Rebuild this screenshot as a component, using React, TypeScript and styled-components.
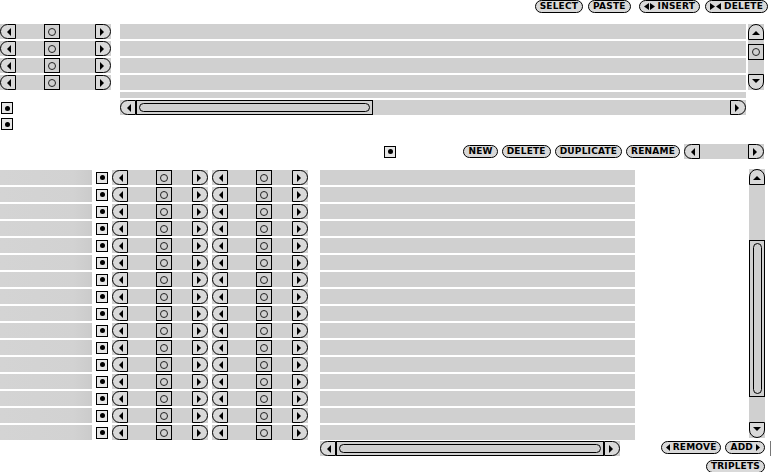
import React from 'react';
import styled, { createGlobalStyle } from 'styled-components';

const GRAY = '#d0d0d0';
const FILL = '#d9d9d9';

const Global = createGlobalStyle`
  html, body { margin: 0; padding: 0; background: #fff; }
  body { font-family: "DejaVu Sans", Verdana, sans-serif; }
`;

const Page = styled.div`
  width: 772px;
  height: 472px;
  overflow: hidden;
  display: flex;
  flex-direction: column;
`;

/* ---------- small controls ---------- */

type Dir = 'left' | 'right' | 'up' | 'down';

const radius: Record<Dir, string> = {
  left: '8px 0 0 8px',
  right: '0 8px 8px 0',
  up: '8px 8px 0 0',
  down: '0 0 8px 8px',
};

const tri: Record<Dir, string> = {
  left: 'border-top:4px solid transparent;border-bottom:4px solid transparent;border-right:4px solid #000;margin-left:2px;',
  right: 'border-top:4px solid transparent;border-bottom:4px solid transparent;border-left:4px solid #000;margin-right:2px;',
  up: 'border-left:4px solid transparent;border-right:4px solid transparent;border-bottom:4px solid #000;margin-top:2px;',
  down: 'border-left:4px solid transparent;border-right:4px solid transparent;border-top:4px solid #000;margin-bottom:2px;',
};

const Arrow = styled.div<{ $dir: Dir }>`
  box-sizing: border-box;
  flex: none;
  width: ${(p) => (p.$dir === 'up' || p.$dir === 'down' ? '100%' : '16px')};
  height: ${(p) => (p.$dir === 'up' || p.$dir === 'down' ? '16px' : '100%')};
  border: 1px solid #000;
  border-radius: ${(p) => radius[p.$dir]};
  background: ${FILL};
  display: flex;
  align-items: center;
  justify-content: center;
  &::after {
    content: '';
    width: 0;
    height: 0;
    ${(p) => tri[p.$dir]}
  }
`;

const Check = styled.div`
  box-sizing: border-box;
  flex: none;
  width: 12px;
  height: 12px;
  border: 1px solid #000;
  background: #e6e6e6;
  display: flex;
  align-items: center;
  justify-content: center;
  &::after {
    content: '';
    width: 5px;
    height: 5px;
    border-radius: 50%;
    background: #000;
  }
`;

const SliderBox = styled.div<{ $w: number }>`
  flex: none;
  width: ${(p) => p.$w}px;
  height: 15px;
  display: flex;
  background: ${GRAY};
`;

const Track = styled.div`
  flex: 1;
  display: flex;
  align-items: stretch;
`;

const Knob = styled.div<{ $offset: number }>`
  box-sizing: border-box;
  width: 16px;
  border: 1px solid #000;
  margin-left: ${(p) => p.$offset}px;
  display: flex;
  align-items: center;
  justify-content: center;
  &::after {
    content: '';
    box-sizing: border-box;
    width: 8px;
    height: 8px;
    border: 1px solid #222;
    border-radius: 50%;
  }
`;

function Slider({ width, knob }: { width: number; knob?: number }) {
  return (
    <SliderBox $w={width}>
      <Arrow $dir="left" />
      <Track>{knob !== undefined && <Knob $offset={knob} />}</Track>
      <Arrow $dir="right" />
    </SliderBox>
  );
}

/* scrollbars */

const HBar = styled.div<{ $w: number }>`
  flex: none;
  width: ${(p) => p.$w}px;
  height: 15px;
  display: flex;
  background: ${GRAY};
`;

const HThumb = styled.div<{ $len: number }>`
  box-sizing: border-box;
  width: ${(p) => p.$len}px;
  border: 1px solid #000;
  display: flex;
  align-items: center;
  padding: 0 2px;
`;

const HPill = styled.div`
  box-sizing: border-box;
  flex: 1;
  height: 9px;
  border: 1px solid #000;
  border-radius: 5px;
`;

function HScroll({ width, thumb }: { width: number; thumb: number }) {
  return (
    <HBar $w={width}>
      <Arrow $dir="left" />
      <Track>
        <HThumb $len={thumb}>
          <HPill />
        </HThumb>
      </Track>
      <Arrow $dir="right" />
    </HBar>
  );
}

const VBar = styled.div<{ $h: number }>`
  width: 16px;
  height: ${(p) => p.$h}px;
  display: flex;
  flex-direction: column;
  background: ${GRAY};
`;

const VTrack = styled.div`
  flex: 1;
  display: flex;
  flex-direction: column;
`;

const VThumb = styled.div<{ $offset: number; $len: number }>`
  box-sizing: border-box;
  margin-top: ${(p) => p.$offset}px;
  height: ${(p) => p.$len}px;
  border: 1px solid #000;
  display: flex;
  align-items: center;
  justify-content: center;
  padding: 2px 0;
`;

const VDot = styled.div`
  box-sizing: border-box;
  width: 8px;
  height: 8px;
  border: 1px solid #222;
  border-radius: 50%;
`;

const VPill = styled.div`
  box-sizing: border-box;
  width: 9px;
  height: 100%;
  border: 1px solid #000;
  border-radius: 5px;
`;

/* pill buttons */

const Pill = styled.button`
  box-sizing: border-box;
  flex: none;
  height: 13px;
  margin: 0;
  padding: 0 4px 0 4px;
  border: 1px solid #000;
  border-radius: 7px;
  background: ${FILL};
  color: #000;
  font: bold 9px/1 "DejaVu Sans", Verdana, sans-serif;
  letter-spacing: 0.2px;
  display: inline-flex;
  align-items: center;
  gap: 3px;
  cursor: default;
`;

const Glyph = styled.svg`
  flex: none;
  display: block;
`;

const IconOut = () => (
  <Glyph width="11" height="7" viewBox="0 0 11 7">
    <path d="M0 3.5 L5 0 L5 7 Z M11 3.5 L6 0 L6 7 Z" fill="#000" />
  </Glyph>
);
const IconIn = () => (
  <Glyph width="11" height="7" viewBox="0 0 11 7">
    <path d="M0 0 L5 3.5 L0 7 Z M11 0 L6 3.5 L11 7 Z" fill="#000" />
  </Glyph>
);
const IconLeft = () => (
  <Glyph width="4" height="7" viewBox="0 0 4 7">
    <path d="M0 3.5 L4 0 L4 7 Z" fill="#000" />
  </Glyph>
);
const IconRight = () => (
  <Glyph width="4" height="7" viewBox="0 0 4 7">
    <path d="M4 3.5 L0 0 L0 7 Z" fill="#000" />
  </Glyph>
);

/* ---------- layout ---------- */

const TopBar = styled.div`
  height: 13px;
  display: flex;
  justify-content: flex-end;
  gap: 8px;
  padding-right: 4px;
`;

const BtnGroup = styled.div`
  display: flex;
  gap: 5px;
`;

const TopSection = styled.div`
  margin-top: 11px;
  display: flex;
  align-items: flex-start;
`;

const LeftCol = styled.div`
  width: 113px;
  display: flex;
  flex-direction: column;
  gap: 2px;
`;

const ChecksCol = styled.div`
  margin-top: 10px;
  padding-left: 1px;
  display: flex;
  flex-direction: column;
  gap: 4px;
`;

const MidCol = styled.div`
  margin-left: 7px;
  width: 626px;
  display: flex;
  flex-direction: column;
  gap: 2px;
`;

const Strip = styled.div<{ $h?: number }>`
  height: ${(p) => p.$h ?? 15}px;
  background: ${GRAY};
`;

const TopV = styled.div`
  margin-left: 2px;
`;

const MidBar = styled.div`
  margin-top: 14px;
  height: 15px;
  display: flex;
  align-items: center;
  justify-content: flex-end;
  padding-right: 8px;
  gap: 4px;
`;

const MidCheck = styled.div`
  margin-right: 63px;
`;

const Lower = styled.div`
  margin-top: 10px;
  display: grid;
  grid-template-columns: 308px 12px 315px 1fr 16px 7px;
  grid-template-rows: auto auto auto;
`;

const Controls = styled.div`
  grid-column: 1;
  padding-top: 1px;
  display: flex;
  flex-direction: column;
  gap: 2px;
`;

const CtlRow = styled.div`
  height: 15px;
  display: flex;
  align-items: center;
  gap: 4px;
`;

const Label = styled.div`
  width: 92px;
  height: 15px;
  background: linear-gradient(90deg, #d4d4d4 0%, #d2d2d2 80%, #cbcbcb 100%);
`;

const ListCol = styled.div`
  grid-column: 3;
  padding-top: 1px;
  display: flex;
  flex-direction: column;
  gap: 2px;
`;

const LowerV = styled.div`
  grid-column: 5;
  grid-row: 1;
`;

const BottomScroll = styled.div`
  grid-column: 3;
  grid-row: 2;
  margin-top: 1px;
`;

const BottomBtns = styled.div`
  grid-column: 4 / 6;
  grid-row: 2;
  margin-top: 1px;
  display: flex;
  justify-content: flex-end;
  align-items: flex-start;
  gap: 4px;
`;

const Tick = styled.div`
  grid-column: 6;
  grid-row: 2;
  margin: 1px 0 0 5px;
  width: 1px;
  height: 15px;
  background: #777;
`;

const TripletsRow = styled.div`
  grid-column: 4 / 6;
  grid-row: 3;
  margin-top: 4px;
  display: flex;
  justify-content: flex-end;
`;

export default function App() {
  const top = [0, 1, 2, 3];
  const rows = Array.from({ length: 16 }, (_, i) => i);
  return (
    <Page>
      <Global />
      <TopBar>
        <BtnGroup>
          <Pill>SELECT</Pill>
          <Pill>PASTE</Pill>
        </BtnGroup>
        <BtnGroup>
          <Pill>
            <IconOut />
            INSERT
          </Pill>
          <Pill>
            <IconIn />
            DELETE
          </Pill>
        </BtnGroup>
      </TopBar>

      <TopSection>
        <LeftCol>
          {top.map((i) => (
            <Slider key={i} width={111} knob={28} />
          ))}
          <ChecksCol>
            <Check />
            <Check />
          </ChecksCol>
        </LeftCol>
        <MidCol>
          {top.map((i) => (
            <Strip key={i} />
          ))}
          <Strip $h={6} />
          <HScroll width={626} thumb={237} />
        </MidCol>
        <TopV>
          <VBar $h={66}>
            <Arrow $dir="up" />
            <VTrack>
              <VThumb $offset={4} $len={16}>
                <VDot />
              </VThumb>
            </VTrack>
            <Arrow $dir="down" />
          </VBar>
        </TopV>
      </TopSection>

      <MidBar>
        <MidCheck>
          <Check />
        </MidCheck>
        <Pill>NEW</Pill>
        <Pill>DELETE</Pill>
        <Pill>DUPLICATE</Pill>
        <Pill>RENAME</Pill>
        <Slider width={80} />
      </MidBar>

      <Lower>
        <Controls>
          {rows.map((i) => (
            <CtlRow key={i}>
              <Label />
              <Check />
              <Slider width={96} knob={28} />
              <Slider width={96} knob={28} />
            </CtlRow>
          ))}
        </Controls>
        <ListCol>
          {rows.map((i) => (
            <Strip key={i} />
          ))}
        </ListCol>
        <LowerV>
          <VBar $h={269}>
            <Arrow $dir="up" />
            <VTrack>
              <VThumb $offset={55} $len={157}>
                <VPill />
              </VThumb>
            </VTrack>
            <Arrow $dir="down" />
          </VBar>
        </LowerV>
        <BottomScroll>
          <HScroll width={300} thumb={268} />
        </BottomScroll>
        <BottomBtns>
          <Pill>
            <IconLeft />
            REMOVE
          </Pill>
          <Pill>
            ADD
            <IconRight />
          </Pill>
        </BottomBtns>
        <Tick />
        <TripletsRow>
          <Pill>TRIPLETS</Pill>
        </TripletsRow>
      </Lower>
    </Page>
  );
}
